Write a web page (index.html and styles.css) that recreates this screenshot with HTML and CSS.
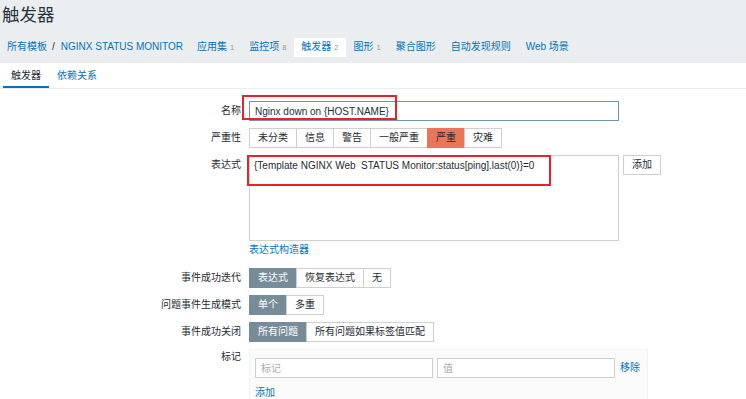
FILE: index.html
```html
<!DOCTYPE html>
<html lang="zh-CN">
<head>
    <meta charset="UTF-8">
    <meta name="viewport" content="width=device-width, initial-scale=1.0">
    <title>触发器</title>
    <link rel="stylesheet" href="styles.css">
</head>
<body>
    <!-- Page header with title and object navigation -->
    <header class="page-header">
        <h1 class="page-title">触发器</h1>
        <ul class="object-nav">
            <li class="crumbs">
                <a href="#">所有模板</a><span class="sep">/</span><a href="#">NGINX STATUS MONITOR</a>
            </li>
            <li><a href="#">应用集</a><sup>1</sup></li>
            <li><a href="#">监控项</a><sup>8</sup></li>
            <li class="selected"><a href="#">触发器</a><sup>2</sup></li>
            <li><a href="#">图形</a><sup>1</sup></li>
            <li><a href="#">聚合图形</a></li>
            <li><a href="#">自动发现规则</a></li>
            <li><a href="#">Web 场景</a></li>
        </ul>
    </header>

    <!-- Tabs -->
    <ul class="tabs">
        <li class="tab active">触发器</li>
        <li class="tab"><a href="#">依赖关系</a></li>
    </ul>

    <!-- Trigger form -->
    <form class="trigger-form">
        <div class="form-row">
            <label class="form-label">名称</label>
            <div class="form-field">
                <div class="annotated">
                    <input class="text-input name-input" type="text" value="Nginx down on {HOST.NAME}">
                    <span class="mark mark-name"></span>
                </div>
            </div>
        </div>

        <div class="form-row">
            <label class="form-label">严重性</label>
            <div class="form-field">
                <div class="radio-group">
                    <span class="radio-btn">未分类</span>
                    <span class="radio-btn">信息</span>
                    <span class="radio-btn">警告</span>
                    <span class="radio-btn">一般严重</span>
                    <span class="radio-btn sev-high">严重</span>
                    <span class="radio-btn">灾难</span>
                </div>
            </div>
        </div>

        <div class="form-row expr-row">
            <label class="form-label">表达式</label>
            <div class="form-field">
                <div class="expr-line">
                    <div class="annotated">
                        <textarea class="expr-area">{Template NGINX Web  STATUS Monitor:status[ping].last(0)}=0</textarea>
                        <span class="mark mark-expr"></span>
                    </div>
                    <button type="button" class="btn">添加</button>
                </div>
                <a href="#" class="link expr-builder">表达式构造器</a>
            </div>
        </div>

        <div class="form-row">
            <label class="form-label">事件成功迭代</label>
            <div class="form-field">
                <div class="radio-group">
                    <span class="radio-btn checked">表达式</span>
                    <span class="radio-btn">恢复表达式</span>
                    <span class="radio-btn">无</span>
                </div>
            </div>
        </div>

        <div class="form-row">
            <label class="form-label">问题事件生成模式</label>
            <div class="form-field">
                <div class="radio-group">
                    <span class="radio-btn checked">单个</span>
                    <span class="radio-btn">多重</span>
                </div>
            </div>
        </div>

        <div class="form-row">
            <label class="form-label">事件成功关闭</label>
            <div class="form-field">
                <div class="radio-group">
                    <span class="radio-btn checked">所有问题</span>
                    <span class="radio-btn">所有问题如果标签值匹配</span>
                </div>
            </div>
        </div>

        <div class="form-row">
            <label class="form-label label-top">标记</label>
            <div class="form-field">
                <div class="tag-box">
                    <div class="tag-row">
                        <input class="text-input tag-input" type="text" placeholder="标记">
                        <input class="text-input tag-input" type="text" placeholder="值">
                        <a href="#" class="link">移除</a>
                    </div>
                    <a href="#" class="link tag-add">添加</a>
                </div>
            </div>
        </div>
    </form>
</body>
</html>
```

FILE: styles.css
```css
body {
    margin: 0;
    padding: 0;
    background: #ffffff;
    color: #1f2c33;
    font-family: "Liberation Sans", "Noto Sans CJK SC", sans-serif;
    font-size: 10px;
    line-height: 14px;
    overflow: hidden;
}

a {
    color: #0275b8;
    text-decoration: none;
}

ul {
    list-style: none;
    margin: 0;
    padding: 0;
}

/* Header */
.page-header {
    background: #ebeef0;
}

.page-title {
    margin: 0;
    padding-left: 2px;
    height: 31px;
    font-size: 17.5px;
    font-weight: normal;
    line-height: 30px;
    color: #27343b;
}

.object-nav {
    display: flex;
    align-items: center;
    gap: 1px;
    height: 32px;
}

.object-nav li {
    padding: 2px 7px;
    line-height: 14px;
}

.object-nav .crumbs {
    padding-right: 6px;
}

.object-nav .sep {
    margin: 0 6px 0 5px;
    color: #1f2c33;
}

.object-nav sup {
    margin-left: 3px;
    font-size: 7.5px;
    color: #8a9aa4;
    vertical-align: baseline;
}

.object-nav .selected {
    background: #ffffff;
}

/* Tabs */
.tabs {
    display: flex;
    padding-left: 3px;
    border-bottom: 1px solid #ebeef0;
}

.tab {
    padding: 2px 8px 0;
    line-height: 21px;
    border-bottom: 2px solid transparent;
}

.tab.active {
    border-bottom-color: #0275b8;
}

/* Form */
.trigger-form {
    padding-top: 12px;
}

.form-row {
    display: grid;
    grid-template-columns: 241px 1fr;
    column-gap: 8px;
    margin-bottom: 7px;
}

.form-row.expr-row {
    margin-bottom: 8px;
}

.form-label {
    text-align: right;
    line-height: 20px;
}

.form-label.label-top {
    line-height: 16px;
}

.text-input {
    box-sizing: border-box;
    height: 20px;
    padding: 0 5px;
    border: 1px solid #cfcfcf;
    background: #ffffff;
    color: #1f2c33;
    font: inherit;
    outline: none;
}

.text-input::placeholder {
    color: #a3adb3;
}

.name-input {
    width: 370px;
    border-color: #6f94ad;
}

.annotated {
    position: relative;
    display: inline-block;
    vertical-align: top;
}

/* red annotation frames drawn over the screenshot */
.mark {
    position: absolute;
    box-sizing: border-box;
    border: 2px solid #e5232c;
    pointer-events: none;
}

.mark-name {
    left: -7px;
    top: -6px;
    width: 155px;
    height: 25px;
}

.mark-expr {
    left: -2px;
    top: 0;
    width: 304px;
    height: 31px;
}

.radio-group {
    display: flex;
    height: 20px;
}

.radio-btn {
    box-sizing: border-box;
    height: 20px;
    padding: 0 8px;
    border: 1px solid #cfcfcf;
    margin-left: -1px;
    line-height: 18px;
    background: #ffffff;
}

.radio-btn:first-child {
    margin-left: 0;
}

.radio-btn.checked {
    background: #768d99;
    border-color: #768d99;
    color: #ffffff;
}

.radio-btn.sev-high {
    background: #e97659;
    border-color: #e97659;
}

.expr-line {
    display: flex;
    align-items: flex-start;
    gap: 4px;
}

.expr-area {
    display: block;
    box-sizing: border-box;
    width: 370px;
    height: 86px;
    margin: 0;
    padding: 3px 4px;
    border: 1px solid #cfcfcf;
    font: inherit;
    line-height: 14px;
    color: #1f2c33;
    resize: none;
    white-space: pre;
}

.btn {
    box-sizing: border-box;
    height: 20px;
    padding: 0 8px;
    border: 1px solid #cfcfcf;
    background: #ffffff;
    color: #1f2c33;
    font: inherit;
    line-height: 18px;
}

.expr-builder {
    display: inline-block;
    margin-top: 2px;
    margin-bottom: 3px;
    line-height: 14px;
}

.tag-box {
    box-sizing: border-box;
    width: 399px;
    height: 60px;
    padding: 8px 5px;
    background: #fbfbfb;
    border: 1px solid #f0f2f3;
}

.tag-row {
    display: flex;
    align-items: center;
    gap: 4px;
}

.tag-input {
    width: 178px;
}

.tag-row .link {
    margin-left: 1px;
}

.tag-add {
    display: inline-block;
    margin-top: 8px;
}
```
